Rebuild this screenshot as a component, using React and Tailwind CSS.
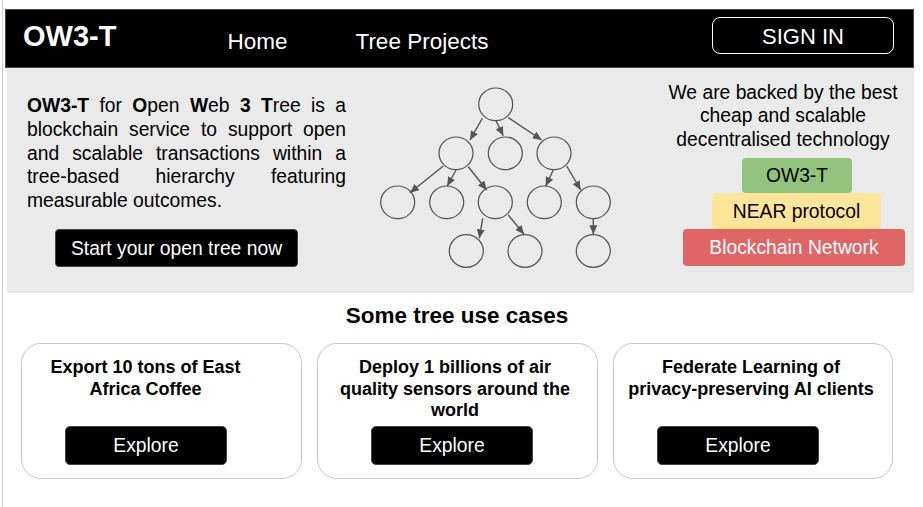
export default function App() {
  const nodes = [
    [495.7, 104.3],
    [456, 153.3], [505.3, 153.3], [554, 153.3],
    [397.7, 202.3], [446.7, 202.3], [495.3, 202.3], [544.3, 202.3], [593.3, 202.3],
    [466.3, 251], [525, 251], [593.3, 251],
  ];
  const edges = [
    [482.3, 118.3, 470, 140],
    [496, 120.7, 503.3, 135.7],
    [508.3, 117.7, 541.7, 140],
    [443.3, 166, 410, 192.7],
    [456, 170, 447.3, 186],
    [468.3, 166.7, 486.7, 190],
    [553.3, 170, 545.7, 186],
    [566.7, 166, 580.7, 190],
    [482.7, 218.3, 479.3, 238.3],
    [508.3, 215, 524, 234.3],
    [593.3, 218.7, 593.3, 234.3],
  ];

  return (
    <div className="w-[923px] h-[507px] bg-white font-['Liberation_Sans',Arial,sans-serif] text-black overflow-hidden">
      <div className="ml-[2px] h-[507px] border-l border-[#d0d0d0] pt-[9px]">
        <header className="ml-[2px] w-[909px] h-[59px] bg-black border border-[#4a4a4a] flex items-start text-white">
          <div className="ml-[17px] mt-[9px] text-[29px] leading-[34px] font-bold">OW3-T</div>
          <nav className="ml-[111px] mt-[18px] flex gap-[68px] text-[22.5px] leading-[27px]">
            <span>Home</span>
            <span>Tree Projects</span>
          </nav>
          <button className="ml-auto mr-[19px] mt-[7px] w-[182px] h-[37px] border border-white rounded-[8px] text-[22px] leading-[26px] flex items-center justify-center pt-[2px]">
            SIGN IN
          </button>
        </header>

        <section className="ml-[4px] w-[907px] h-[225px] bg-[#eaeaea] flex items-start">
          <div className="ml-[20px] mt-[26px] w-[319px]">
            <p className="text-[19.3px] leading-[23.75px] text-justify">
              <b>OW3-T</b> for <b>O</b>pen <b>W</b>eb <b>3</b> <b>T</b>ree is a blockchain service to support open and scalable transactions within a tree-based hierarchy featuring measurable outcomes.
            </p>
            <button className="block ml-[28px] mt-[16px] w-[243px] h-[38px] pt-[2px] bg-black text-white rounded-[4px] border border-[#444] text-[19.3px] leading-[23px]">
              Start your open tree now
            </button>
          </div>

          <svg
            className="ml-[29px] mt-[12px] shrink-0"
            width="240"
            height="200"
            viewBox="375 80 240 200"
          >
            <defs>
              <marker
                id="arrow"
                markerUnits="userSpaceOnUse"
                markerWidth="10"
                markerHeight="8"
                refX="9"
                refY="4"
                orient="auto"
              >
                <path d="M0,0 L9,4 L0,8 z" fill="#555555" />
              </marker>
            </defs>
            {edges.map(([x1, y1, x2, y2], i) => (
              <line
                key={i}
                x1={x1}
                y1={y1}
                x2={x2}
                y2={y2}
                stroke="#555555"
                strokeWidth="1.4"
                markerEnd="url(#arrow)"
              />
            ))}
            {nodes.map(([cx, cy], i) => (
              <ellipse
                key={i}
                cx={cx}
                cy={cy}
                rx="17"
                ry="16.3"
                fill="none"
                stroke="#555555"
                strokeWidth="1.2"
              />
            ))}
          </svg>

          <div className="ml-[48px] mt-[13px] w-[240px]">
            <p className="text-center text-[19.3px] leading-[23.3px]">
              We are backed by the best
              <br />
              cheap and scalable
              <br />
              decentralised technology
            </p>
            <div className="ml-[79px] mt-[7px] w-[110px] h-[35px] pt-[3px] bg-[#93c47d] rounded-[4px] flex items-center justify-center text-[19.3px]">
              OW3-T
            </div>
            <div className="ml-[49px] w-[169px] h-[36px] pt-[3px] bg-[#ffe599] rounded-[4px] flex items-center justify-center text-[19.3px]">
              NEAR protocol
            </div>
            <div className="ml-[20px] w-[222px] h-[37px] pt-[3px] bg-[#e06666] rounded-[4px] flex items-center justify-center text-[19.3px] text-white">
              Blockchain Network
            </div>
          </div>
        </section>

        <h2 className="ml-[18px] w-[872px] mt-[9px] text-center font-bold text-[22.5px] leading-[27px]">
          Some tree use cases
        </h2>

        <div className="ml-[18px] mt-[14px] flex gap-[15px]">
          <div className="w-[281px] h-[136px] border border-[#c9c9c9] rounded-[20px] pt-[13px]">
            <div className="ml-[13px] w-[221px] h-[69px] text-center font-bold text-[18px] leading-[21.7px]">
              Export 10 tons of East Africa Coffee
            </div>
            <button className="block ml-[43px] w-[162px] h-[39px] pt-[2px] bg-black text-white rounded-[5px] border border-[#444] text-[19.3px]">
              Explore
            </button>
          </div>
          <div className="w-[281px] h-[136px] border border-[#c9c9c9] rounded-[20px] pt-[13px]">
            <div className="ml-[17px] w-[240px] h-[69px] text-center font-bold text-[18px] leading-[21.7px]">
              Deploy 1 billions of air quality sensors around the world
            </div>
            <button className="block ml-[53px] w-[162px] h-[39px] pt-[2px] bg-black text-white rounded-[5px] border border-[#444] text-[19.3px]">
              Explore
            </button>
          </div>
          <div className="w-[280px] h-[136px] border border-[#c9c9c9] rounded-[20px] pt-[13px]">
            <div className="ml-[12px] w-[250px] h-[69px] text-center font-bold text-[18px] leading-[21.7px]">
              Federate Learning of privacy-preserving AI clients
            </div>
            <button className="block ml-[43px] w-[162px] h-[39px] pt-[2px] bg-black text-white rounded-[5px] border border-[#444] text-[19.3px]">
              Explore
            </button>
          </div>
        </div>
      </div>
    </div>
  );
}
